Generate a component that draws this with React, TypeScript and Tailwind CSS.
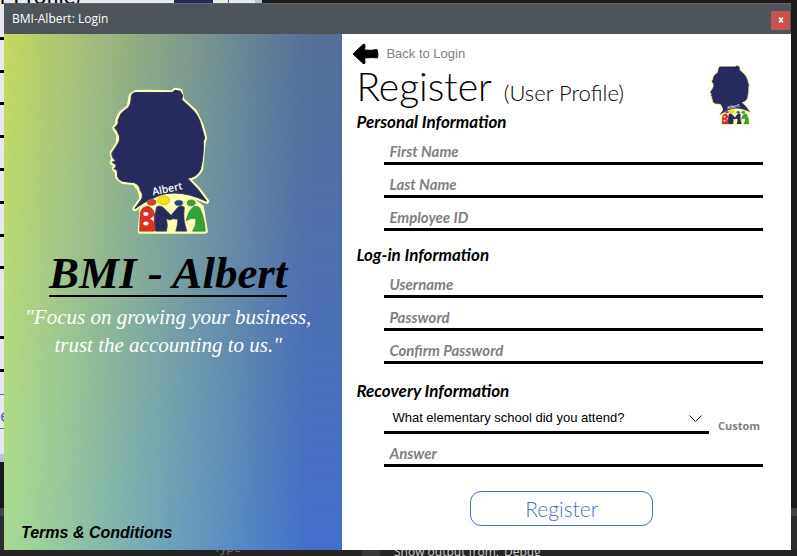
import { useId } from "react";

const gothic = "font-['Century_Gothic','Lato',sans-serif]";
const script = "font-['Monotype_Corsiva','Liberation_Serif',serif]";
const arial = "font-['Liberation_Sans',Arial,sans-serif]";
const segoe = "font-['Segoe_UI','Open_Sans',sans-serif]";

function Logo({ className }: { className: string }) {
  return (
    <svg viewBox="42 38 304 440" className={className} role="img" aria-label="BMI Albert logo">
      <g stroke="#ffffb4" strokeWidth="15" strokeLinejoin="round" fill="#ffffb4">
        <path d="M125 54 L111 64 L105 97 L80 117 L70 138 L72 147 L62 159 L75 181 L72 207 L54 234 L59 252 L54 262 L66 269 L61 281 L70 290 L71 306 L86 319 L120 322 L138 345 L143 371 L122 400 Q152 378 182 370 Q245 338 336 378 L310 343 L278 310 Q306 306 318 282 L326 200 L330 189 L319 150 L300 111 L262 76 L257 50 L242 47 L234 55 L160 53 Z" />
        <path d="M143 402 L160 375 L210 362 L290 374 L320 395 L332 467 L138 467 Z" />
      </g>
      <path
        d="M125 54 Q113 55 111 68 Q112 86 103 99 Q88 108 80 119 L72 138 Q76 146 62 159 Q72 168 75 181 Q80 196 70 210 L54 234 Q52 244 60 252 Q70 256 55 262 L66 269 Q68 276 61 281 Q72 284 70 294 Q68 310 84 318 Q102 322 120 322 Q137 328 138 345 Q148 355 143 371 L122 400 Q152 378 182 366 Q245 336 336 378 L310 343 L278 310 Q306 308 318 282 Q328 240 326 200 L330 189 L319 150 Q312 126 298 110 Q280 92 262 76 L264 62 L257 50 L242 47 Q236 54 228 54 Z"
        fill="#262a5c"
        stroke="#33365a"
        strokeWidth="3"
      />
      <ellipse cx="172" cy="381" rx="13" ry="9" fill="#d9402f" stroke="#6b5b50" strokeWidth="2" />
      <ellipse cx="208" cy="375" rx="18" ry="13" fill="#f5e214" stroke="#b8a81c" strokeWidth="2" />
      <ellipse cx="253" cy="383" rx="12" ry="8" fill="#2f4378" stroke="#5a6470" strokeWidth="2" />
      <ellipse cx="290" cy="383" rx="12" ry="9" fill="#36a338" stroke="#4a7048" strokeWidth="2" />
      <path d="M136 467 L138 412 Q144 393 162 393 Q178 400 181 416 L186 440 L189 462 L178 467 Z" fill="#e02f22" stroke="#86463c" strokeWidth="2" />
      <ellipse cx="155" cy="416" rx="8" ry="6" fill="#fff" />
      <ellipse cx="155" cy="444" rx="8" ry="6" fill="#fff" />
      <path d="M168 430 L178 422 L179 438 Z" fill="#fff" />
      <path d="M184 467 Q178 430 186 396 Q194 388 206 396 L230 420 L250 396 Q260 388 270 396 Q264 430 277 467 L244 467 Q250 448 250 432 L236 430 L226 434 L216 430 Q222 450 216 467 Z" fill="#262a5c" stroke="#3d4260" strokeWidth="2" />
      <path d="M275 436 Q282 404 298 394 Q310 390 316 400 Q330 430 332 467 L294 467 Q306 450 304 430 Q290 426 275 436 Z" fill="#2fa535" stroke="#3f6f3e" strokeWidth="2" />
      <text
        x="176"
        y="361"
        transform="rotate(-12 176 361)"
        fontSize="31"
        fontWeight="600"
        fill="#fff"
        className={segoe}
      >
        Albert
      </text>
    </svg>
  );
}

function BackArrow() {
  return (
    <svg viewBox="0 0 27 22" className="h-[22px] w-[27px]" aria-hidden="true">
      <path
        d="M1 11 L11 1.5 Q13.5 .5 13 3 L12.5 7 Q19 7.8 25 6.6 Q26.6 11 25.6 14.8 Q19 14.2 12.5 15 L13 19 Q13.4 21.6 11 20.4 Z"
        fill="#000"
        stroke="#000"
        strokeLinejoin="round"
      />
    </svg>
  );
}

function Field({ label, type = "text" }: { label: string; type?: string }) {
  const id = useId();
  return (
    <div className="flex">
      <label htmlFor={id} className="sr-only">
        {label}
      </label>
      <input
        id={id}
        type={type}
        placeholder={label}
        className={`${gothic} h-[33px] w-full rounded-none border-b-3 border-black bg-transparent px-[5px] pt-2 text-[15px] font-bold italic text-black outline-none placeholder:text-[#808080] placeholder:opacity-100`}
      />
    </div>
  );
}

function Heading({ children }: { children: string }) {
  return <h2 className={`${gothic} h-5 pl-3.5 text-[17px] leading-5 font-bold italic`}>{children}</h2>;
}

const pageRules = [37, 70, 102, 135, 168, 201, 234, 266, 336, 369];

function Desktop() {
  return (
    <div aria-hidden="true" className="absolute inset-0 overflow-hidden bg-[#1b1a19]">
      <div className="absolute top-0 left-0 h-[462px] w-[262px] bg-[#e8e8ea]">
        <span className={`${gothic} absolute -top-4 left-0 text-[22px] leading-6 whitespace-nowrap text-black`}>
          r Profile)
        </span>
        <div className="absolute top-0 left-[174px] h-1 w-[39px] bg-[#262a5c]" />
        <div className="absolute top-0 left-[228px] h-1 w-px bg-[#555]" />
        <div className="absolute top-0 right-0 h-1 w-[7px] bg-[#b9c3d3]" />
        {pageRules.map((y) => (
          <div key={y} className="absolute left-0 h-[3px] w-1 bg-black" style={{ top: y }} />
        ))}
        <div className="absolute top-[394px] left-0 h-[35px] w-1 border-y border-[#4472c8]" />
        <span className={`${gothic} absolute top-[402px] left-0 text-[20px] leading-6 text-[#4472c8]`}>e</span>
        <div className="absolute bottom-0 left-0 h-2 w-1 bg-[#b9c3d3]" />
      </div>
      <div className="absolute top-[508px] right-0 left-0 h-12 bg-[#2d2d30]" />
      <div className="absolute top-[508px] right-0 left-0 h-2 bg-[#414146]" />
      <div className={`${segoe} absolute right-0 bottom-0 left-0 h-1.5 overflow-hidden bg-[#252526] text-[12px] leading-4`}>
        <span className="absolute -top-2.5 left-[214px] text-[#77777a]">Type</span>
        <div className="absolute top-0 left-[362px] h-2 w-[18px] bg-[#38383c]" />
        <span className="absolute -top-1.5 left-[394px] text-[#d0d0d0]">Show output from:</span>
        <span className="absolute -top-1.5 left-[504px] text-[#d0d0d0]">Debug</span>
      </div>
    </div>
  );
}

export default function App() {
  return (
    <div className="relative flex min-h-screen flex-col pt-[3px] pr-1.5 pb-1.5 pl-1">
      <Desktop />
      <div className="relative flex flex-1 flex-col bg-white text-black">
        <header className="flex h-[31px] items-center justify-between border-t border-[#5d666c] bg-[#4d545a] pr-px pl-2">
          <h1 className={`${segoe} text-[12px] leading-4 text-white`}>BMI-Albert: Login</h1>
          <button
            type="button"
            aria-label="Close"
            className="mt-0.5 flex size-[19px] items-center justify-center bg-[#c75050]"
          >
            <svg viewBox="0 0 6 6" className="size-1.5" aria-hidden="true">
              <path d="M1 .5 L5 5.5 M5 .5 L1 5.5" stroke="#fff" strokeWidth="1.6" />
            </svg>
          </button>
        </header>

        <div className="flex flex-1">
          <aside className="relative flex w-[43%] flex-col bg-linear-to-r from-[#c6da5d] to-[#566f98] to-90% pr-2.5">
            <div className="absolute inset-0 bg-linear-to-r from-[#a9da92] to-[#416fcb] to-90% [mask-image:linear-gradient(to_bottom,transparent,black)]" />
            <div className="relative flex flex-1 flex-col items-center">
              <Logo className="mt-[53px] mr-[18px] h-[148px] w-[102px]" />
              <p
                className={`${script} mt-4 border-b-2 border-black text-[45px] leading-[44px] font-bold whitespace-nowrap italic`}
              >
                BMI - Albert
              </p>
              <p className={`${script} mt-1.5 text-center text-[21px] leading-7 whitespace-nowrap text-white italic`}>
                "Focus on growing your business,
                <br />
                trust the accounting to us."
              </p>
            </div>
            <a
              href="#terms"
              className={`${arial} relative mb-[7px] self-start pl-[17px] text-[16px] leading-5 font-bold italic`}
            >
              Terms &amp; Conditions
            </a>
          </aside>

          <form className="flex flex-1 flex-col" onSubmit={(e) => e.preventDefault()}>
            <div className="flex items-start justify-between pr-10">
              <div>
                <button type="button" className="mt-2 ml-2.5 flex h-6 items-center gap-[7px]">
                  <BackArrow />
                  <span className={`${arial} text-[13px] leading-5 text-[#808080]`}>Back to Login</span>
                </button>
                <p className={`${gothic} flex h-[46px] items-baseline gap-3 pl-3.5 leading-10 font-light`}>
                  <span className="text-[39px]">Register</span>
                  <span className="text-[22px]">(User Profile)</span>
                </p>
              </div>
              <Logo className="mt-[30px] -mb-4 h-[62px] w-[42px]" />
            </div>

            <section>
              <Heading>Personal Information</Heading>
              <div className="pr-7 pl-[42px]">
                <Field label="First Name" />
                <Field label="Last Name" />
                <Field label="Employee ID" />
              </div>
            </section>

            <section className="mt-3.5">
              <Heading>Log-in Information</Heading>
              <div className="pr-7 pl-[42px]">
                <Field label="Username" />
                <Field label="Password" type="password" />
                <Field label="Confirm Password" type="password" />
              </div>
            </section>

            <section className="mt-[17px]">
              <Heading>Recovery Information</Heading>
              <div className="pr-7 pl-[42px]">
                <div className="flex h-[33px]">
                  <label htmlFor="question" className="sr-only">
                    Recovery question
                  </label>
                  <div className="relative flex-1">
                    <select
                      id="question"
                      className={`${arial} h-full w-full appearance-none rounded-none border-b-3 border-black bg-transparent px-2 pt-1 text-[13px] outline-none`}
                    >
                      <option>What elementary school did you attend?</option>
                    </select>
                    <svg viewBox="0 0 13 8" className="pointer-events-none absolute top-3.5 right-[7px] h-2 w-[13px]" aria-hidden="true">
                      <path d="M.5 .5 L6.5 6.5 L12.5 .5" fill="none" stroke="#000" />
                    </svg>
                  </div>
                  <button type="button" className={`${segoe} w-[54px] pt-4 pl-[9px] text-left text-[11px] leading-4 font-bold text-[#808080]`}>
                    Custom
                  </button>
                </div>
                <Field label="Answer" />
              </div>
            </section>

            <button
              type="submit"
              className={`${gothic} mt-6 mr-[10px] h-[35px] w-[183px] self-center rounded-[11px] border border-[#4472c8] text-[21px] leading-6 font-light text-[#4472c8]`}
            >
              Register
            </button>
          </form>
        </div>
      </div>
    </div>
  );
}
